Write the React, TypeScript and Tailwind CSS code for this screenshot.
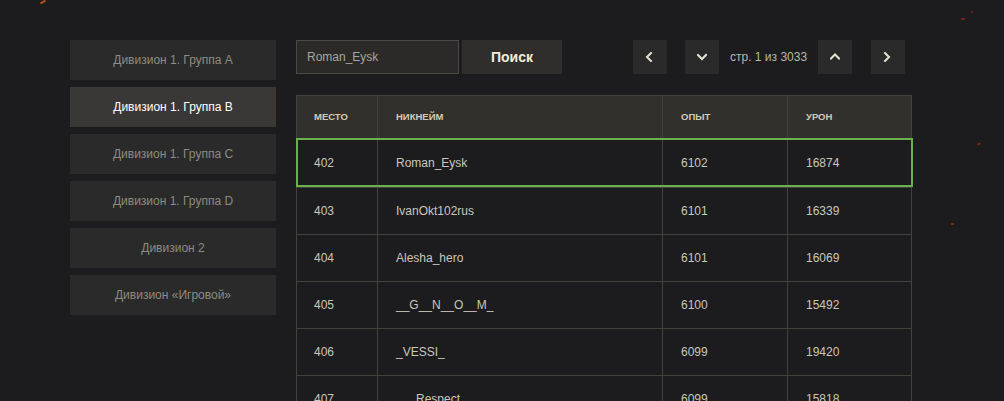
import React, { useState } from "react";

const divisions = [
  "Дивизион 1. Группа A",
  "Дивизион 1. Группа B",
  "Дивизион 1. Группа C",
  "Дивизион 1. Группа D",
  "Дивизион 2",
  "Дивизион «Игровой»",
];

const rows = [
  { place: 402, nick: "Roman_Eysk", exp: 6102, dmg: 16874 },
  { place: 403, nick: "IvanOkt102rus", exp: 6101, dmg: 16339 },
  { place: 404, nick: "Alesha_hero", exp: 6101, dmg: 16069 },
  { place: 405, nick: "__G__N__O__M_", exp: 6100, dmg: 15492 },
  { place: 406, nick: "_VESSI_", exp: 6099, dmg: 19420 },
  { place: 407, nick: "___Respect___", exp: 6099, dmg: 15818 },
];

const Chevron = ({ dir }: { dir: "left" | "right" | "up" | "down" }) => {
  const paths = {
    left: "M6 1 L2 5 L6 9",
    right: "M2 1 L6 5 L2 9",
    up: "M1 6.5 L5 2.5 L9 6.5",
    down: "M1 3 L5 7 L9 3",
  };
  return (
    <svg width="10" height="10" viewBox="0 0 10 10" fill="none">
      <path d={paths[dir]} stroke="#e6e2cc" strokeWidth="2" strokeLinecap="square" />
    </svg>
  );
};

const PageButton = ({ dir }: { dir: "left" | "right" | "up" | "down" }) => (
  <button className="w-[34px] h-[34px] bg-[#2a2a2a] flex items-center justify-center">
    <Chevron dir={dir} />
  </button>
);

const cols = "grid grid-cols-[80px_285px_125px_124px]";

export default function App() {
  const [active, setActive] = useState(1);
  const [query, setQuery] = useState("Roman_Eysk");

  return (
    <div
      className="relative w-full h-[401px] overflow-hidden bg-[#1c1c1e] text-[12px]"
      style={{ fontFamily: '"Liberation Sans", Arial, sans-serif' }}
    >
      {/* embers */}
      <span className="absolute left-[40px] top-[1px] w-[6px] h-[2px] rotate-[-30deg] bg-[#c2581c] rounded-full" />
      <span className="absolute left-[961px] top-[18px] w-[4px] h-[2px] bg-[#8a1d1a] rounded-full" />
      <span className="absolute left-[971px] top-[11px] w-[2px] h-[2px] bg-[#6e1a18]" />
      <span className="absolute left-[977px] top-[143px] w-[4px] h-[2px] rotate-[-20deg] bg-[#8a1d1a] rounded-full" />
      <span className="absolute left-[951px] top-[223px] w-[3px] h-[2px] bg-[#8a1d1a]" />

      <div className="flex pt-[40px] pl-[70px] gap-[20px]">
        {/* sidebar */}
        <div className="w-[206px] flex flex-col gap-[7px]">
          {divisions.map((d, i) => (
            <button
              key={d}
              onClick={() => setActive(i)}
              className={`h-[40px] text-center ${
                i === active ? "bg-[#393836] text-white" : "bg-[#2a2a2a] text-[#8e8b80]"
              }`}
            >
              {d}
            </button>
          ))}
        </div>

        {/* main */}
        <div className="w-[616px]">
          <div className="flex items-center h-[34px]">
            <input
              value={query}
              onChange={(e) => setQuery(e.target.value)}
              className="w-[163px] h-[34px] px-[10px] bg-[#2b2a28] border border-[#4a4946] text-[#a8a69c] outline-none"
            />
            <button className="ml-[3px] w-[100px] h-[34px] bg-[#2f2e2c] text-[#f0ecdc] font-bold text-[14px]">
              Поиск
            </button>
            <div className="ml-[71px] flex items-center">
              <PageButton dir="left" />
              <div className="ml-[18px]">
                <PageButton dir="down" />
              </div>
              <span className="mx-[11px] text-[#b8b6aa]">стр. 1 из 3033</span>
              <PageButton dir="up" />
              <div className="ml-[19px]">
                <PageButton dir="right" />
              </div>
            </div>
          </div>

          <div className="mt-[21px] border border-[#44423e] text-[#c9c7bc]">
            <div className={`${cols} h-[42px] bg-[#32302d] text-[9.5px] font-bold uppercase text-[#d2cbb4]`}>
              <div className="flex items-center px-[17px]">Место</div>
              <div className="flex items-center px-[18px] border-l border-[#44423e]">Никнейм</div>
              <div className="flex items-center px-[18px] border-l border-[#44423e]">Опыт</div>
              <div className="flex items-center px-[18px] border-l border-[#44423e]">Урон</div>
            </div>
            {rows.map((r, i) => (
              <div
                key={r.place}
                className={`${cols} relative ${i === 0 ? "h-[49px]" : "h-[47px] border-t border-[#44423e]"}`}
              >
                <div className="flex items-center px-[17px]">{r.place}</div>
                <div className="flex items-center px-[18px] border-l border-[#44423e]">{r.nick}</div>
                <div className="flex items-center px-[18px] border-l border-[#44423e]">{r.exp}</div>
                <div className="flex items-center px-[18px] border-l border-[#44423e]">{r.dmg}</div>
                {i === 0 && (
                  <div className="absolute -left-[1px] -right-[2px] top-0 bottom-0 border-2 border-[#6ab04c] pointer-events-none" />
                )}
              </div>
            ))}
          </div>
        </div>
      </div>
    </div>
  );
}
